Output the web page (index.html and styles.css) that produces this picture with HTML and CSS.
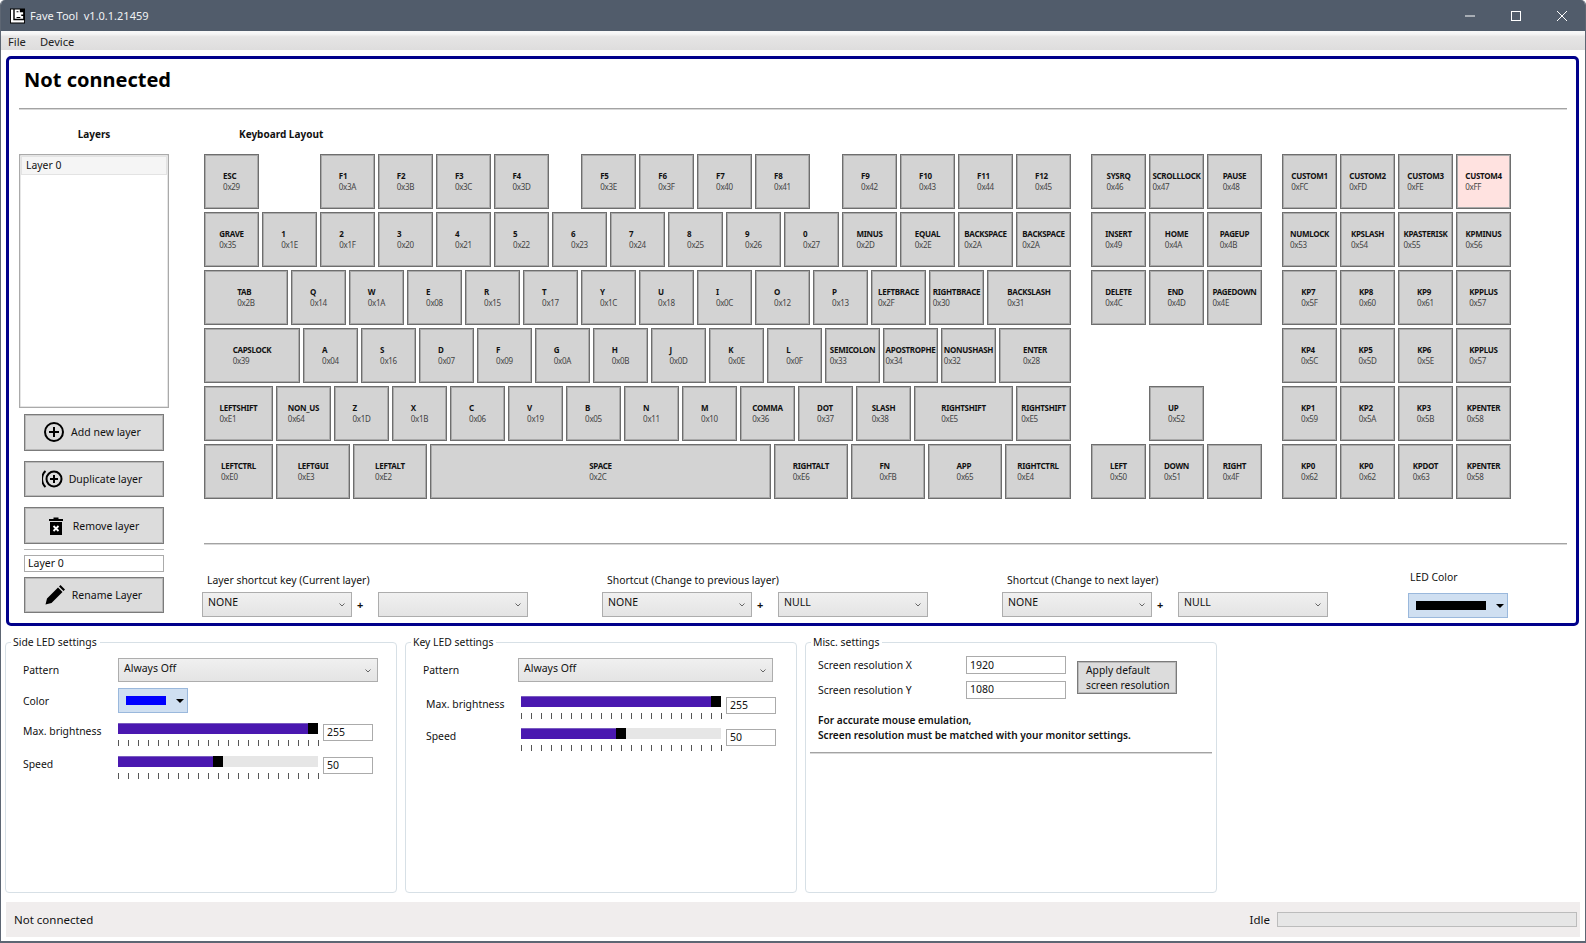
FILE: index.html
```html
<!DOCTYPE html>
<html lang="en">
<head>
<meta charset="utf-8">
<title>Fave Tool</title>
<link rel="stylesheet" href="styles.css">
</head>
<body>
<div class="window">
  <header class="titlebar">
    <svg class="logo" viewBox="0 0 16 16"><rect width="16" height="16" fill="#000"/><path d="M1 1h2.500v11.500H15V15H1z" fill="#fff"/><path d="M5 1h5.500v3H14v2.500h-2V8h2v3H5z" fill="#fff"/><path d="M7 3h2v1H7zM7 9h4v1H7z" fill="#000"/></svg>
    <span class="app-title">Fave Tool&nbsp; v1.0.1.21459</span>
    <div class="winctl">
      <svg viewBox="0 0 12 12"><path d="M1 6h10" stroke="#fff" stroke-width="1"/></svg>
      <svg viewBox="0 0 12 12"><rect x="1.500" y="1.500" width="9" height="9" fill="none" stroke="#fff"/></svg>
      <svg viewBox="0 0 12 12"><path d="M1 1l10 10M11 1L1 11" stroke="#fff" stroke-width="1"/></svg>
    </div>
  </header>
  <nav class="menubar"><span>File</span><span>Device</span></nav>

  <main class="panel">
    <h1>Not connected</h1>
    <hr class="rule">
    <div class="workspace">
      <aside class="layers">
        <h2 class="layers-title">Layers</h2>
        <div class="listbox"><div class="list-item">Layer 0</div></div>
        <div class="layer-actions">
          <button class="btn btn-add">
            <svg class="ico" viewBox="0 0 22 22"><circle cx="11" cy="11" r="9" fill="none" stroke="#000" stroke-width="2"/><path d="M11 6v10M6 11h10" stroke="#000" stroke-width="2"/></svg>
            <span>Add new layer</span>
          </button>
          <button class="btn btn-dup">
            <svg class="ico" viewBox="3 0 22 22"><circle cx="15" cy="11" r="7.500" fill="none" stroke="#000" stroke-width="2"/><path d="M15 7v8M11 11h8" stroke="#000" stroke-width="2"/><path d="M6.500 3a11 11 0 0 0 0 16" fill="none" stroke="#000" stroke-width="2"/></svg>
            <span>Duplicate layer</span>
          </button>
          <button class="btn btn-rem">
            <svg class="ico-trash" viewBox="4 2 14 18"><path d="M4 4h14v2H4zM8.500 2.500h5V4h-5z" fill="#000"/><path d="M5 7h12v13H5z" fill="#000"/><path d="M8.500 11l5 5M13.500 11l-5 5" stroke="#fff" stroke-width="1.800"/></svg>
            <span>Remove layer</span>
          </button>
          <hr class="thin">
          <input class="field name-field" value="Layer 0">
          <button class="btn btn-ren">
            <svg class="ico" viewBox="0 0 22 22"><path d="M1.500 20.500l1.500-6 11-11 4.500 4.500-11 11z M15 2.500l1.500-1.500 4.500 4.500-1.500 1.500z" fill="#000"/></svg>
            <span>Rename Layer</span>
          </button>
        </div>
      </aside>

      <section class="board">
        <h2 class="board-title">Keyboard Layout</h2>
        <div class="keyboard">
          <div class="block main">
            <div class="row">
              <div class="key"><b>ESC</b><span>0x29</span></div><i class="sp55"></i>
              <div class="key"><b>F1</b><span>0x3A</span></div>
              <div class="key"><b>F2</b><span>0x3B</span></div>
              <div class="key"><b>F3</b><span>0x3C</span></div>
              <div class="key"><b>F4</b><span>0x3D</span></div><i class="sp26"></i>
              <div class="key"><b>F5</b><span>0x3E</span></div>
              <div class="key"><b>F6</b><span>0x3F</span></div>
              <div class="key"><b>F7</b><span>0x40</span></div>
              <div class="key"><b>F8</b><span>0x41</span></div><i class="sp26"></i>
              <div class="key"><b>F9</b><span>0x42</span></div>
              <div class="key"><b>F10</b><span>0x43</span></div>
              <div class="key"><b>F11</b><span>0x44</span></div>
              <div class="key"><b>F12</b><span>0x45</span></div>
            </div>
            <div class="row">
              <div class="key"><b>GRAVE</b><span>0x35</span></div>
              <div class="key"><b>1</b><span>0x1E</span></div>
              <div class="key"><b>2</b><span>0x1F</span></div>
              <div class="key"><b>3</b><span>0x20</span></div>
              <div class="key"><b>4</b><span>0x21</span></div>
              <div class="key"><b>5</b><span>0x22</span></div>
              <div class="key"><b>6</b><span>0x23</span></div>
              <div class="key"><b>7</b><span>0x24</span></div>
              <div class="key"><b>8</b><span>0x25</span></div>
              <div class="key"><b>9</b><span>0x26</span></div>
              <div class="key"><b>0</b><span>0x27</span></div>
              <div class="key"><b>MINUS</b><span>0x2D</span></div>
              <div class="key"><b>EQUAL</b><span>0x2E</span></div>
              <div class="key"><b>BACKSPACE</b><span>0x2A</span></div>
              <div class="key"><b>BACKSPACE</b><span>0x2A</span></div>
            </div>
            <div class="row">
              <div class="key w84"><b>TAB</b><span>0x2B</span></div>
              <div class="key"><b>Q</b><span>0x14</span></div>
              <div class="key"><b>W</b><span>0x1A</span></div>
              <div class="key"><b>E</b><span>0x08</span></div>
              <div class="key"><b>R</b><span>0x15</span></div>
              <div class="key"><b>T</b><span>0x17</span></div>
              <div class="key"><b>Y</b><span>0x1C</span></div>
              <div class="key"><b>U</b><span>0x18</span></div>
              <div class="key"><b>I</b><span>0x0C</span></div>
              <div class="key"><b>O</b><span>0x12</span></div>
              <div class="key"><b>P</b><span>0x13</span></div>
              <div class="key"><b>LEFTBRACE</b><span>0x2F</span></div>
              <div class="key"><b>RIGHTBRACE</b><span>0x30</span></div>
              <div class="key w84"><b>BACKSLASH</b><span>0x31</span></div>
            </div>
            <div class="row">
              <div class="key w96"><b>CAPSLOCK</b><span>0x39</span></div>
              <div class="key"><b>A</b><span>0x04</span></div>
              <div class="key"><b>S</b><span>0x16</span></div>
              <div class="key"><b>D</b><span>0x07</span></div>
              <div class="key"><b>F</b><span>0x09</span></div>
              <div class="key"><b>G</b><span>0x0A</span></div>
              <div class="key"><b>H</b><span>0x0B</span></div>
              <div class="key"><b>J</b><span>0x0D</span></div>
              <div class="key"><b>K</b><span>0x0E</span></div>
              <div class="key"><b>L</b><span>0x0F</span></div>
              <div class="key"><b>SEMICOLON</b><span>0x33</span></div>
              <div class="key"><b>APOSTROPHE</b><span>0x34</span></div>
              <div class="key"><b>NONUSHASH</b><span>0x32</span></div>
              <div class="key w72"><b>ENTER</b><span>0x28</span></div>
            </div>
            <div class="row">
              <div class="key w69"><b>LEFTSHIFT</b><span>0xE1</span></div>
              <div class="key"><b>NON_US</b><span>0x64</span></div>
              <div class="key"><b>Z</b><span>0x1D</span></div>
              <div class="key"><b>X</b><span>0x1B</span></div>
              <div class="key"><b>C</b><span>0x06</span></div>
              <div class="key"><b>V</b><span>0x19</span></div>
              <div class="key"><b>B</b><span>0x05</span></div>
              <div class="key"><b>N</b><span>0x11</span></div>
              <div class="key"><b>M</b><span>0x10</span></div>
              <div class="key"><b>COMMA</b><span>0x36</span></div>
              <div class="key"><b>DOT</b><span>0x37</span></div>
              <div class="key"><b>SLASH</b><span>0x38</span></div>
              <div class="key w99"><b>RIGHTSHIFT</b><span>0xE5</span></div>
              <div class="key"><b>RIGHTSHIFT</b><span>0xE5</span></div>
            </div>
            <div class="row">
              <div class="key w69"><b>LEFTCTRL</b><span>0xE0</span></div>
              <div class="key w74"><b>LEFTGUI</b><span>0xE3</span></div>
              <div class="key w74"><b>LEFTALT</b><span>0xE2</span></div>
              <div class="key w341"><b>SPACE</b><span>0x2C</span></div>
              <div class="key w74"><b>RIGHTALT</b><span>0xE6</span></div>
              <div class="key w74"><b>FN</b><span>0xFB</span></div>
              <div class="key w74"><b>APP</b><span>0x65</span></div>
              <div class="key w66"><b>RIGHTCTRL</b><span>0xE4</span></div>
            </div>
          </div>
          <div class="block nav">
            <div class="row">
              <div class="key"><b>SYSRQ</b><span>0x46</span></div>
              <div class="key"><b>SCROLLLOCK</b><span>0x47</span></div>
              <div class="key"><b>PAUSE</b><span>0x48</span></div>
            </div>
            <div class="row">
              <div class="key"><b>INSERT</b><span>0x49</span></div>
              <div class="key"><b>HOME</b><span>0x4A</span></div>
              <div class="key"><b>PAGEUP</b><span>0x4B</span></div>
            </div>
            <div class="row">
              <div class="key"><b>DELETE</b><span>0x4C</span></div>
              <div class="key"><b>END</b><span>0x4D</span></div>
              <div class="key"><b>PAGEDOWN</b><span>0x4E</span></div>
            </div>
            <div class="row"></div>
            <div class="row">
              <i class="sp55"></i>
              <div class="key"><b>UP</b><span>0x52</span></div>
            </div>
            <div class="row">
              <div class="key"><b>LEFT</b><span>0x50</span></div>
              <div class="key"><b>DOWN</b><span>0x51</span></div>
              <div class="key"><b>RIGHT</b><span>0x4F</span></div>
            </div>
          </div>
          <div class="block pad">
            <div class="row">
              <div class="key"><b>CUSTOM1</b><span>0xFC</span></div>
              <div class="key"><b>CUSTOM2</b><span>0xFD</span></div>
              <div class="key"><b>CUSTOM3</b><span>0xFE</span></div>
              <div class="key key-hot"><b>CUSTOM4</b><span>0xFF</span></div>
            </div>
            <div class="row">
              <div class="key"><b>NUMLOCK</b><span>0x53</span></div>
              <div class="key"><b>KPSLASH</b><span>0x54</span></div>
              <div class="key"><b>KPASTERISK</b><span>0x55</span></div>
              <div class="key"><b>KPMINUS</b><span>0x56</span></div>
            </div>
            <div class="row">
              <div class="key"><b>KP7</b><span>0x5F</span></div>
              <div class="key"><b>KP8</b><span>0x60</span></div>
              <div class="key"><b>KP9</b><span>0x61</span></div>
              <div class="key"><b>KPPLUS</b><span>0x57</span></div>
            </div>
            <div class="row">
              <div class="key"><b>KP4</b><span>0x5C</span></div>
              <div class="key"><b>KP5</b><span>0x5D</span></div>
              <div class="key"><b>KP6</b><span>0x5E</span></div>
              <div class="key"><b>KPPLUS</b><span>0x57</span></div>
            </div>
            <div class="row">
              <div class="key"><b>KP1</b><span>0x59</span></div>
              <div class="key"><b>KP2</b><span>0x5A</span></div>
              <div class="key"><b>KP3</b><span>0x5B</span></div>
              <div class="key"><b>KPENTER</b><span>0x58</span></div>
            </div>
            <div class="row">
              <div class="key"><b>KP0</b><span>0x62</span></div>
              <div class="key"><b>KP0</b><span>0x62</span></div>
              <div class="key"><b>KPDOT</b><span>0x63</span></div>
              <div class="key"><b>KPENTER</b><span>0x58</span></div>
            </div>
          </div>
        </div>
        <hr class="rule board-rule">
        <div class="shortcuts">
          <div class="shortcut">
            <label>Layer shortcut key (Current layer)</label>
            <div class="combo-pair">
              <div class="combo c150"><span>NONE</span><svg class="chev" viewBox="0 0 6 4"><path d="M.5 .5l2.500 2.500 2.500-2.500" fill="none" stroke="#666" stroke-width="1"/></svg></div>
              <span class="plus">+</span>
              <div class="combo c150"><span></span><svg class="chev" viewBox="0 0 6 4"><path d="M.5 .5l2.500 2.500 2.500-2.500" fill="none" stroke="#666" stroke-width="1"/></svg></div>
            </div>
          </div>
          <div class="shortcut">
            <label>Shortcut (Change to previous layer)</label>
            <div class="combo-pair">
              <div class="combo c150"><span>NONE</span><svg class="chev" viewBox="0 0 6 4"><path d="M.5 .5l2.500 2.500 2.500-2.500" fill="none" stroke="#666" stroke-width="1"/></svg></div>
              <span class="plus">+</span>
              <div class="combo c150"><span>NULL</span><svg class="chev" viewBox="0 0 6 4"><path d="M.5 .5l2.500 2.500 2.500-2.500" fill="none" stroke="#666" stroke-width="1"/></svg></div>
            </div>
          </div>
          <div class="shortcut">
            <label>Shortcut (Change to next layer)</label>
            <div class="combo-pair">
              <div class="combo c150"><span>NONE</span><svg class="chev" viewBox="0 0 6 4"><path d="M.5 .5l2.500 2.500 2.500-2.500" fill="none" stroke="#666" stroke-width="1"/></svg></div>
              <span class="plus">+</span>
              <div class="combo c150"><span>NULL</span><svg class="chev" viewBox="0 0 6 4"><path d="M.5 .5l2.500 2.500 2.500-2.500" fill="none" stroke="#666" stroke-width="1"/></svg></div>
            </div>
          </div>
          <div class="led-color">
            <label>LED Color</label>
            <div class="color-btn color-wide"><i class="swatch swatch-black"></i><i class="drop"></i></div>
          </div>
        </div>
      </section>
    </div>
  </main>

  <div class="groups">
    <fieldset class="group g-side">
      <legend>Side LED settings</legend>
      <div class="line l-pattern"><label>Pattern</label>
        <div class="combo c260"><span>Always Off</span><svg class="chev" viewBox="0 0 6 4"><path d="M.5 .5l2.500 2.500 2.500-2.500" fill="none" stroke="#666" stroke-width="1"/></svg></div>
      </div>
      <div class="line l-color"><label>Color</label>
        <div class="color-btn"><i class="swatch swatch-blue"></i><i class="drop"></i></div>
      </div>
      <div class="line l-max"><label>Max. brightness</label>
        <div class="slider"><div class="track"><div class="fill f-full"></div><i class="thumb"></i></div><div class="ticks"></div></div>
        <input class="field num" value="255">
      </div>
      <div class="line l-speed"><label>Speed</label>
        <div class="slider"><div class="track"><div class="fill f-half"></div><i class="thumb"></i></div><div class="ticks"></div></div>
        <input class="field num" value="50">
      </div>
    </fieldset>

    <fieldset class="group g-key">
      <legend>Key LED settings</legend>
      <div class="line l-pattern"><label>Pattern</label>
        <div class="combo c255"><span>Always Off</span><svg class="chev" viewBox="0 0 6 4"><path d="M.5 .5l2.500 2.500 2.500-2.500" fill="none" stroke="#666" stroke-width="1"/></svg></div>
      </div>
      <div class="line l-max2"><label class="indent">Max. brightness</label>
        <div class="slider"><div class="track"><div class="fill f-full"></div><i class="thumb"></i></div><div class="ticks"></div></div>
        <input class="field num" value="255">
      </div>
      <div class="line l-speed2"><label class="indent">Speed</label>
        <div class="slider"><div class="track"><div class="fill f-half"></div><i class="thumb"></i></div><div class="ticks"></div></div>
        <input class="field num" value="50">
      </div>
    </fieldset>

    <fieldset class="group g-misc">
      <legend>Misc. settings</legend>
      <div class="res">
        <div class="res-fields">
          <div class="res-line"><label>Screen resolution X</label><input class="field res-input" value="1920"></div>
          <div class="res-line"><label>Screen resolution Y</label><input class="field res-input" value="1080"></div>
        </div>
        <button class="btn btn-apply">Apply default<br>screen resolution</button>
      </div>
      <p class="note">For accurate mouse emulation,<br>Screen resolution must be matched with your monitor settings.</p>
      <hr class="rule misc-rule">
    </fieldset>
  </div>

  <footer class="statusbar">
    <span>Not connected</span>
    <span class="idle">Idle</span>
    <div class="progress"></div>
  </footer>
</div>
</body>
</html>
```
FILE: styles.css
```css
* { box-sizing: border-box; }
html, body { margin: 0; padding: 0; }
body {
  width: 1586px;
  height: 943px;
  overflow: hidden;
  font-family: "Noto Sans", "Liberation Sans", sans-serif;
  font-size: 11px;
  color: #111;
  background: #fff;
}
.window {
  width: 1586px;
  height: 943px;
  display: flex;
  flex-direction: column;
  border-left: 1px solid #5d6673;
  border-right: 1px solid #5d6673;
  border-bottom: 2px solid #5d6673;
  border-radius: 5px 5px 0 0;
  overflow: hidden;
}
.titlebar {
  height: 31px;
  flex: none;
  margin: 0 -1px;
  background: #515c6b;
  color: #fff;
  display: flex;
  align-items: center;
  padding-left: 10px;
}
.logo { width: 15px; height: 16px; }
.app-title { margin-left: 5px; font-size: 11px; color: #f0f2f4; }
.winctl { margin-left: auto; display: flex; gap: 34px; padding-right: 18px; align-items: center; }
.winctl svg { width: 12px; height: 12px; display: block; }
.menubar {
  height: 19px;
  flex: none;
  background: linear-gradient(#f8f8f8 0, #f6f6f6 15%, #e6e5e5 30%, #dedddd 100%);
  display: flex;
  gap: 14px;
  align-items: center;
  padding: 1px 0 0 7px;
  font-size: 11.200px;
  color: #222;
}
.panel {
  flex: none;
  margin: 6px 0 0 5px;
  width: 1573px;
  height: 570px;
  border: 3px solid #00008b;
  border-radius: 5px;
  padding: 0 9px 0 10px;
}
h1 {
  margin: 0;
  padding: 7px 0 0 5px;
  height: 34px;
  font-size: 20px;
  line-height: 28px;
  font-weight: 700;
  color: #000;
}
.rule { border: 0; margin: 0; height: 1px; background: #a3a3a3; box-shadow: 0 1px 0 #d8d8d8; }
.panel > .rule { margin-top: 15px; }
.workspace { display: flex; }
.layers { width: 185px; flex: none; }
h2 { margin: 0; font-size: 10px; font-weight: 700; color: #111; height: 45px; line-height: 51px; }
.layers-title { text-align: center; width: 150px; }
.listbox {
  width: 150px;
  height: 254px;
  background: #fff;
  border: 1px solid #aaa;
  padding: 1px;
  box-shadow: inset 0 0 0 0.500px #ccc;
}
.list-item {
  height: 19px;
  line-height: 17px;
  background: #f5f5f5;
  border: 1px solid #e3e3e3;
  padding-left: 4px;
  font-size: 10.400px;
}
.layer-actions { width: 140px; margin-left: 5px; margin-top: 6px; display: flex; flex-direction: column; }
.btn {
  font: inherit;
  color: #111;
  background: #dcdcdc;
  border: 1px solid #7b7b7b;
  box-shadow: inset 0 0 0 1px #b9b9b9;
  display: flex;
  align-items: center;
  justify-content: center;
  height: 37px;
  padding: 0;
  font-size: 10.500px;
}
.ico { width: 22px; height: 22px; flex: none; }
.ico-trash { width: 14px; height: 18px; flex: none; }
.btn-add { gap: 6px; padding: 0 4px 1px 0; }
.btn-dup { height: 36px; margin-top: 10px; gap: 5px; padding-right: 4px; }
.btn-rem { margin-top: 10px; gap: 10px; }
.btn-ren { height: 36px; margin-top: 5px; gap: 6px; padding-right: 2px; }
.thin { border: 0; margin: 5px 0 0; height: 1px; background: #b5b5b5; }
.field {
  font: inherit;
  font-size: 10.500px;
  color: #111;
  background: #fff;
  border: 1px solid #ababab;
  padding: 0 0 1px 3px;
  border-radius: 0;
  outline: none;
}
.name-field { width: 140px; height: 17px; margin-top: 5px; }
.board { flex: none; width: 1363px; }
.board-title { padding-left: 35px; }
.keyboard { display: flex; gap: 20px; }
.block { display: flex; flex-direction: column; gap: 3px; flex: none; }
.main { width: 867px; }
.nav { width: 171px; }
.pad { width: 229px; }
.row { display: flex; gap: 3px; height: 55px; }
.key {
  flex: none;
  width: 55px;
  height: 55px;
  padding-bottom: 1px;
  background: #d3d3d3;
  border: 1px solid #6e6e6e;
  box-shadow: inset 0 0 0 1px #a9a9a9;
  display: grid;
  justify-content: center;
  align-content: center;
  font-size: 8px;
  letter-spacing: -0.300px;
  line-height: 11px;
  white-space: nowrap;
}
.key b { display: block; font-weight: 700; color: #111; }
.key span { display: block; color: #444; }
.key-hot { background: #ffe2e0; }
.w66 { width: 66px; }
.w69 { width: 69px; }
.w72 { width: 72px; }
.w74 { width: 74px; }
.w84 { width: 84px; }
.w96 { width: 96px; }
.w99 { width: 99px; }
.w341 { width: 341px; }
.sp55 { flex: none; width: 55px; }
.sp26 { flex: none; width: 26px; }
.board-rule { margin-top: 44px; width: 100%; }
.shortcuts { display: flex; margin-top: 29px; margin-left: -2px; }
.shortcut { width: 400px; flex: none; }
.shortcut label { display: block; padding-left: 5px; height: 19px; line-height: 15px; font-size: 10.400px; }
.combo-pair { display: flex; align-items: center; }
.plus { width: 26px; padding: 0 0 0 5px; font-weight: 700; font-size: 11px; }
.combo {
  flex: none;
  height: 25px;
  background: linear-gradient(#f0f0f0, #e4e4e4);
  border: 1px solid #adadad;
  display: flex;
  justify-content: space-between;
  padding: 1px 6px 0 5px;
  font-size: 10.500px;
  line-height: 17px;
}
.c150 { width: 150px; }
.c260 { width: 260px; height: 24px; }
.c255 { width: 255px; height: 24px; }
.chev { width: 6px; height: 4px; align-self: center; }
.led-color { width: 100px; margin-left: 6px; margin-top: -3px; }
.led-color label { display: block; height: 23px; line-height: 15px; padding-left: 2px; font-size: 10.400px; }
.color-btn {
  width: 70px;
  height: 25px;
  background: #cfdff1;
  border: 1px solid #9ab8dc;
  display: flex;
  align-items: center;
  padding-left: 7px;
}
.color-wide { width: 100px; }
.swatch { display: block; height: 9px; }
.swatch-blue { width: 40px; background: #0000ff; }
.swatch-black { width: 70px; background: #000; }
.drop {
  width: 0;
  height: 0;
  border-left: 4px solid transparent;
  border-right: 4px solid transparent;
  border-top: 4px solid #000;
  margin-left: 10px;
  margin-top: 1px;
}
.groups { display: flex; gap: 8px; padding-left: 4px; margin-top: 9px; flex: none; height: 258px; }
.group {
  margin: 0;
  min-width: 0;
  flex: none;
  width: 392px;
  height: 258px;
  border: 1px solid #d7e0e6;
  border-radius: 4px;
  padding: 0;
}
.g-misc { width: 412px; }
legend { font-size: 10.400px; margin-left: 5px; padding: 0 3px 0 2px; line-height: 14px; }
.line { display: flex; align-items: flex-start; }
.line label { flex: none; width: 95px; margin-left: 17px; font-size: 10.400px; }
.line label.indent { margin-left: 20px; width: 95px; }
.l-pattern { margin-top: 9px; }
.l-pattern label { padding-top: 5px; }
.l-color { margin-top: 6px; }
.l-color label { padding-top: 6px; }
.l-max { margin-top: 10px; height: 33px; }
.l-max label, .l-speed label, .l-max2 label, .l-speed2 label { padding-top: 1px; }
.l-max2 { margin-top: 14px; height: 32px; }
.slider { width: 200px; flex: none; }
.track { height: 11px; background: #e6e6e6; position: relative; }
.fill { height: 100%; background: #4a18b0; box-shadow: inset 0 1px 0 #7a5cc0; }
.f-full { width: 100%; }
.f-half { width: 50%; }
.thumb { position: absolute; top: 0; width: 10px; height: 100%; background: #000; }
.f-full + .thumb { right: 0; }
.f-half + .thumb { left: 95px; }
.ticks {
  height: 6px;
  margin-top: 6px;
  width: 201px;
  background: repeating-linear-gradient(90deg, #555 0, #555 1px, transparent 1px, transparent 10px);
}
.num { width: 50px; height: 17px; margin-left: 5px; margin-top: 1px; }
.res { display: flex; margin-top: 7px; }
.res-fields { width: 250px; margin-left: 12px; flex: none; }
.res-line { display: flex; height: 24.500px; }
.res-line label { width: 148px; font-size: 10.400px; padding-top: 2px; flex: none; }
.res-input { width: 100px; height: 18px; }
.btn-apply {
  display: block;
  width: 100px;
  height: 33px;
  text-align: left;
  padding: 0 0 0 8px;
  margin-left: 9px;
  margin-top: 5px;
  font-size: 10.300px;
  line-height: 15px;
}
.note { margin: 8px 0 0 12px; font-weight: 600; font-size: 10.150px; line-height: 15px; }
.misc-rule { margin: 9px 4px 0 4px; }
.statusbar {
  flex: none;
  margin: 9px 0 0 5px;
  width: 1574px;
  height: 35px;
  background: #f0eded;
  display: flex;
  align-items: center;
  padding: 0 3px 0 8px;
  font-size: 11.500px;
}
.idle { margin-left: auto; margin-right: 7px; }
.progress { width: 300px; height: 15px; background: #e6e6e6; border: 1px solid #bcbcbc; }
```
